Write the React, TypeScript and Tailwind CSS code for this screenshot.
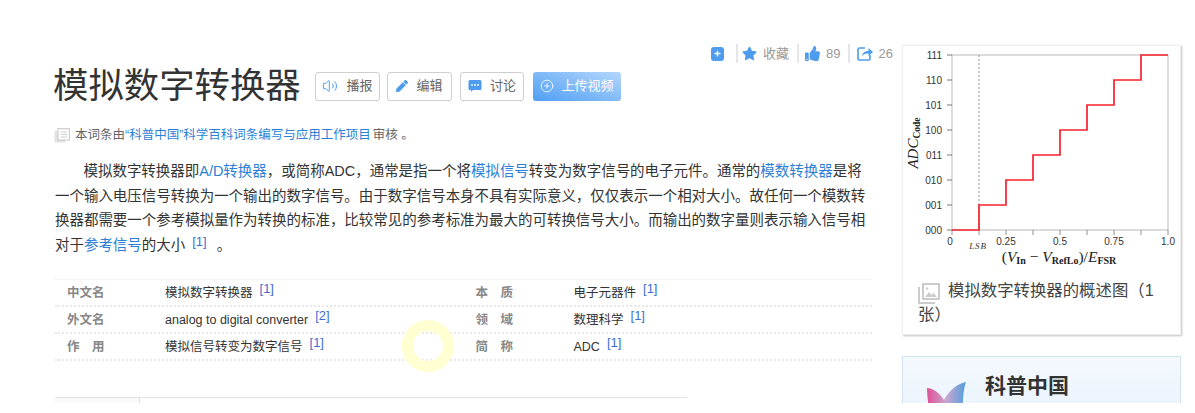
import { FaStar, FaThumbsUp, FaPen, FaPlus } from 'react-icons/fa'
import { Volume2, CirclePlus } from 'lucide-react'

const font = "font-['Liberation_Sans','Noto_Sans_CJK_SC',sans-serif]"

// 词条基本信息，左右两列
const rows = [
  { k1: '中文名', v1: '模拟数字转换器', r1: '[1]', k2: '本　质', v2: '电子元器件', r2: '[1]' },
  { k1: '外文名', v1: 'analog to digital converter', r1: '[2]', k2: '领　域', v2: '数理科学', r2: '[1]' },
  { k1: '作　用', v1: '模拟信号转变为数字信号', r1: '[1]', k2: '简　称', v2: 'ADC', r2: '[1]' },
]

function Link({ children }: { children: React.ReactNode }) {
  return <a className="text-[#2c7fd6]">{children}</a>
}

function Ref({ children }: { children: React.ReactNode }) {
  return <span className="relative -top-[4px] ml-[7px] text-[13px] text-[#3e6fd0]">{children}</span>
}

function Btn({ icon, label, w }: { icon: React.ReactNode; label: string; w: string }) {
  return (
    <div className={`flex h-[29px] items-center justify-center gap-2 rounded-[3px] border border-[#cfcfcf] bg-white text-[13px] text-[#666] ${w}`}>
      {icon}
      <span>{label}</span>
    </div>
  )
}

function Divider() {
  return <div className="h-[19px] w-[2px] bg-[#e3e6ea]" />
}

function Chart() {
  const x0 = 47
  const w = 216
  const y0 = 184
  const h = 175
  const xs = [0, 1, 2, 3, 4, 5, 6, 7, 8].map((i) => x0 + (w / 8) * i)
  const ys = [0, 1, 2, 3, 4, 5, 6, 7].map((i) => y0 - (h / 7) * i)
  const codes = ['000', '001', '010', '011', '100', '101', '110', '111']
  let d = `M${xs[0]} ${ys[0]} H${xs[1]}`
  for (let i = 1; i < 8; i++) d += ` V${ys[i]} H${xs[i + 1]}`
  return (
    <svg width="273" height="230" viewBox="0 0 273 230" className="block">
      <rect x={x0} y={ys[7]} width={w} height={h} fill="none" stroke="#a8a8a8" strokeWidth="0.8" />
      <line x1={xs[1]} y1={ys[7]} x2={xs[1]} y2={y0} stroke="#777" strokeWidth="0.8" strokeDasharray="2 2" />
      {xs.map((x) => (
        <line key={x} x1={x} y1={y0} x2={x} y2={y0 + 5} stroke="#777" strokeWidth="0.8" />
      ))}
      {ys.map((y, i) => (
        <g key={y}>
          <line x1={x0 - 5} y1={y} x2={x0} y2={y} stroke="#555" strokeWidth="0.8" />
          <text x={x0 - 10} y={y + 3.5} textAnchor="end" fontSize="10" fill="#333" fontFamily="Liberation Sans">
            {codes[i]}
          </text>
        </g>
      ))}
      <path d={d} fill="none" stroke="#f5222d" strokeWidth="1.7" />
      {[
        [0, '0'],
        [2, '0.25'],
        [4, '0.5'],
        [6, '0.75'],
        [8, '1.0'],
      ].map(([i, t]) => (
        <text key={t as string} x={xs[i as number] - (i === 0 ? 2 : 0)} y="199" textAnchor="middle" fontSize="10" fill="#333" fontFamily="Liberation Sans">
          {t}
        </text>
      ))}
      <text x="73" y="203" textAnchor="middle" fontSize="9" fontStyle="italic" letterSpacing="0.8" fill="#333" fontFamily="Liberation Serif">LSB</text>
      <text x="154" y="216" textAnchor="middle" fontSize="15.5" fill="#222" fontFamily="Liberation Serif">
        (<tspan fontStyle="italic">V</tspan>
        <tspan fontSize="10" fontWeight="bold" dy="2">In</tspan>
        <tspan dy="-2"> − </tspan>
        <tspan fontStyle="italic">V</tspan>
        <tspan fontSize="10" fontWeight="bold" dy="2">RefLo</tspan>
        <tspan dy="-2">)/</tspan>
        <tspan fontStyle="italic">E</tspan>
        <tspan fontSize="10" fontWeight="bold" dy="2">FSR</tspan>
      </text>
      <text transform="translate(13 97) rotate(-90)" textAnchor="middle" fontSize="15" fill="#222" fontFamily="Liberation Serif">
        <tspan fontStyle="italic">ADC</tspan>
        <tspan fontSize="9.5" fontWeight="bold" dy="2">Code</tspan>
      </text>
    </svg>
  )
}

export default function App() {
  return (
    <div className={`relative h-[403px] w-[1195px] overflow-hidden bg-white ${font}`}>
      <div className="flex pl-[55px] pt-[45px]">
        <div className="w-[817px] shrink-0">
          {/* 收藏・点赞・转发 */}
          <div className="-mr-[21px] flex h-[17px] items-center justify-end text-[13px] text-[#999]">
            <div className="mr-[12px] flex h-[14px] w-[13px] items-center justify-center rounded-[3px] bg-[#4f9cee]">
              <FaPlus className="text-white" size={7} />
            </div>
            <Divider />
            <FaStar className="ml-[4px] text-[#4f9cee]" size={15} />
            <span className="ml-[6px]">收藏</span>
            <div className="ml-[8px] mr-[6px]"><Divider /></div>
            <FaThumbsUp className="text-[#4f9cee]" size={15} />
            <span className="ml-[6px]">89</span>
            <div className="ml-[7px] mr-[7px]"><Divider /></div>
            <svg width="16" height="15" viewBox="0 0 16 15" className="mr-[4px]">
              <path d="M8 2H2.500A1.500 1.500 0 0 0 1 3.500v9A1.500 1.500 0 0 0 2.500 14h9a1.500 1.500 0 0 0 1.500-1.500V9" fill="none" stroke="#4f9cee" strokeWidth="1.600" />
              <path d="M5 10c.5-3.500 3-5 6.500-5V2L16 6l-4.500 4V7.500C9 7.500 6.500 8 5 10z" fill="#4f9cee" />
            </svg>
            <span className="ml-[2px]">26</span>
          </div>

          <div className="flex h-[48px] items-center">
            <h1 className="-ml-[2px] w-[262px] shrink-0 text-[35.4px] font-normal leading-[48px] text-[#333]">模拟数字转换器</h1>
            <div className="flex gap-[7px]">
              <Btn w="w-[65px]" label="播报" icon={<Volume2 size={16} strokeWidth={1.5} className="text-[#4f9cee]" />} />
              <Btn w="w-[65px]" label="编辑" icon={<FaPen size={12} className="text-[#4f9cee]" />} />
              <Btn
                w="ml-px w-[64px]"
                label="讨论"
                icon={
                  <svg width="14" height="14" viewBox="0 0 14 14">
                    <path d="M2 1h10a1.500 1.500 0 0 1 1.500 1.500v7A1.500 1.500 0 0 1 12 11H5l-2 2v-2H2A1.500 1.500 0 0 1 .5 9.500v-7A1.500 1.500 0 0 1 2 1z" fill="#4f9cee" />
                    <circle cx="4" cy="6" r="0.9" fill="#fff" />
                    <circle cx="7" cy="6" r="0.9" fill="#fff" />
                    <circle cx="10" cy="6" r="0.9" fill="#fff" />
                  </svg>
                }
              />
              <div className="ml-[2px] flex h-[29px] w-[88px] items-center justify-center gap-[7px] rounded-[3px] bg-[linear-gradient(20deg,#4f9ff5,#b4d6fb)] text-[13px] text-white">
                <CirclePlus size={14} strokeWidth={1.4} />
                <span>上传视频</span>
              </div>
            </div>
          </div>

          <div className="mt-[13px] flex h-[24px] items-center text-[12.5px] text-[#666]">
            <svg width="16" height="15" viewBox="0 0 16 15" className="-ml-px mr-[5px]">
              <rect x="0.500" y="3" width="11" height="11.500" fill="#e2e2e2" />
              <rect x="4" y="0.700" width="11.300" height="11.300" fill="#fff" stroke="#c4c4c4" />
              <path d="M6.500 4h6.500M6.500 6.500h6.500M6.500 9h6.500" stroke="#d0d0d0" />
            </svg>
            <span>本词条由</span>
            <Link>“科普中国”科学百科词条编写与应用工作项目</Link>
            <span className="ml-[2px]">审核 。</span>
          </div>

          <p className="mt-[12px] indent-[28.5px] text-[14.48px] leading-[24.6px] text-[#333]">
            模拟数字转换器即<Link>A/D转换器</Link>，或简称ADC，通常是指一个将<Link>模拟信号</Link>转变为数字信号的电子元件。通常的<Link>模数转换器</Link>是将一个输入电压信号转换为一个输出的数字信号。由于数字信号本身不具有实际意义，仅仅表示一个相对大小。故任何一个模数转换器都需要一个参考模拟量作为转换的标准，比较常见的参考标准为最大的可转换信号大小。而输出的数字量则表示输入信号相对于<Link>参考信号</Link>的大小
            <Ref>[1]</Ref>
            <span className="ml-[10px]">。</span>
          </p>

          <div className="mt-[21px] border-t border-dotted border-[#eee]">
            {rows.map((r) => (
              <div key={r.k1} className="grid h-[27px] grid-cols-2 items-center border-b-2 border-dotted border-[#e8e8e8] text-[12.500px] text-[#333]">
                <div className="flex items-center">
                  <span className="w-[110px] pl-[12px] font-bold text-[#888]">{r.k1}</span>
                  <span>{r.v1}</span>
                  <Ref>{r.r1}</Ref>
                </div>
                <div className="flex items-center pl-[11px]">
                  <span className="w-[99px] pl-[1px] font-bold text-[#888]">{r.k2}</span>
                  <span>{r.v2}</span>
                  <Ref>{r.r2}</Ref>
                </div>
              </div>
            ))}
          </div>

          <div className="mt-[36px] flex h-[8px] w-[632px] border-t border-[#e2e2e2]">
            <div className="h-full w-[85px] border-r border-[#e2e2e2] bg-[#fafafa]" />
          </div>
        </div>

        <div className="ml-[30px] w-[279px] shrink-0">
          <div className="h-[290px] border border-[#eee] bg-white pl-[2px] shadow-[1px_1px_2px_rgba(0,0,0,0.25)]">
            <Chart />
            <p className="mt-[2px] pl-[13px] pr-[14px] text-[16.400px] leading-[24px] text-[#444]">
              <svg width="22" height="21" viewBox="0 0 22 21" className="mr-[8px] -mb-[4px] inline-block">
                <path d="M1 4v16h16" fill="none" stroke="#ccc" strokeWidth="2" />
                <rect x="5" y="1" width="16" height="15" fill="#fff" stroke="#bbb" strokeWidth="1.500" />
                <path d="M7 14l4-5 2.500 3 2-2 3.500 4z" fill="#ccc" />
                <circle cx="9" cy="5.500" r="1.200" fill="#ccc" />
              </svg>
              模拟数字转换器的概述图（1张）
            </p>
          </div>

          <div className="mt-[21px] flex h-[60px] border border-[#d3e3f2] bg-[linear-gradient(#f4f9fe,#eaf3fc)] pl-[24px]">
            <svg width="40" height="40" viewBox="0 0 40 40" className="mt-[24px] shrink-0">
              <defs>
                <linearGradient id="wing" x1="0" y1="0" x2="1" y2="0">
                  <stop offset="0" stopColor="#e0509a" />
                  <stop offset="0.5" stopColor="#c9a6cf" />
                  <stop offset="1" stopColor="#4f9fdc" />
                </linearGradient>
              </defs>
              <path d="M0 7c6 0 13 5 17 12 5-9 12-16 22-18-3 8-3 18-4 39H4C2 28 0 17 0 7z" fill="url(#wing)" />
            </svg>
            <div className="ml-[18px] mt-[15px] text-[21px] font-bold leading-[28px] text-[#333]">科普中国</div>
          </div>
        </div>
      </div>

      {/* 鼠标高亮圈 */}
      <div className="absolute left-[402px] top-[320px] h-[52px] w-[52px] rounded-full border-[11px] border-[#ffffd2]" />
    </div>
  )
}
